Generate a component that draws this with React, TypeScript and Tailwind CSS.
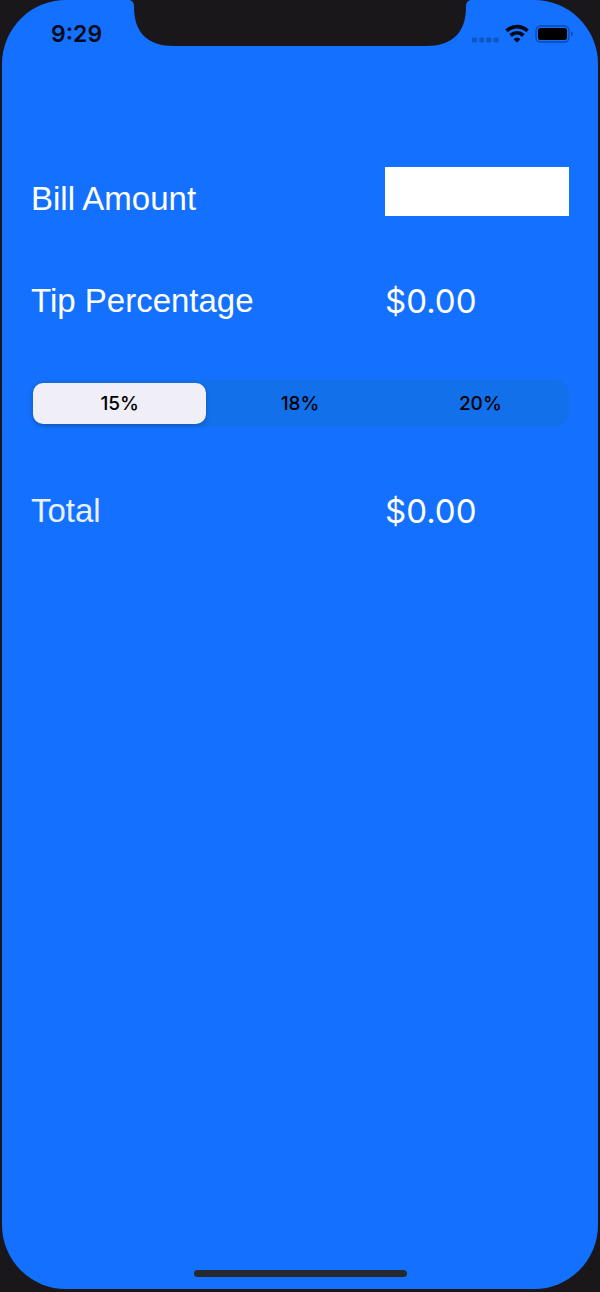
import { useState } from "react";

const TIP_RATES = [15, 18, 20];

function StatusBar() {
  return (
    <header className="relative flex h-[68px] shrink-0 items-center justify-between pr-6 pl-[49px]">
      <time className="text-[23px] leading-7 font-semibold text-[#020a18]">9:29</time>
      <svg
        className="absolute top-0 left-1/2 -translate-x-1/2"
        width="344"
        height="46"
        viewBox="0 0 344 46"
        aria-hidden="true"
      >
        <path
          d="M0 0C4 0 6 2 6 7C6 33 20 46 46 46H298C324 46 338 33 338 7C338 2 340 0 344 0Z"
          fill="#19171a"
        />
      </svg>
      <svg width="102" height="20" viewBox="0 0 102 20" role="img" aria-label="Wi-Fi on, battery full">
        <g fill="#1057c4">
          <rect x="0" y="13.5" width="5" height="5" rx="1" />
          <rect x="7.2" y="13.5" width="5" height="5" rx="1" />
          <rect x="14.4" y="13.5" width="5" height="5" rx="1" />
          <rect x="21.600" y="13.5" width="5" height="5" rx="1" />
        </g>
        <g fill="none" stroke="#000814" strokeWidth="3.8">
          <path d="M34.5 6.9C40.5 1.200 49.5 1.200 55.5 6.9" />
          <path d="M38.6 11.5C42.5 7.900 47.5 7.900 51.4 11.5" />
        </g>
        <path d="M45 18.5L41.600 15.200C43.5 13.300 46.5 13.300 48.4 15.200Z" fill="#000814" />
        <rect x="64" y="2" width="33" height="16" rx="4.5" fill="none" stroke="#0d4aa8" strokeWidth="1.3" />
        <rect x="66" y="4" width="29" height="12" rx="2.5" fill="#000" />
        <path d="M99 7.5C101.5 8.5 101.5 11.5 99 12.5Z" fill="#0d4aa8" />
      </svg>
    </header>
  );
}

export default function App() {
  const [bill, setBill] = useState("");
  const [rate, setRate] = useState(TIP_RATES[0]);

  const amount = Number.parseFloat(bill) || 0;
  const tip = (amount * rate) / 100;
  const row = "grid grid-cols-[1fr_184px] items-end";
  const caption = "font-['Liberation_Sans',sans-serif]";

  return (
    <div className="flex min-h-screen flex-col bg-[#19171a] px-[2px] pb-[3px] font-['Inter',sans-serif]">
      <div className="flex flex-1 flex-col rounded-[64px] bg-[#1471ff]">
        <StatusBar />
        <main className="flex-1 px-[29px] pt-[99px] text-[33px] leading-10 text-white">
          <div className={row}>
            <label htmlFor="bill" className={caption}>
              Bill Amount
            </label>
            <input
              id="bill"
              type="text"
              inputMode="decimal"
              value={bill}
              onChange={(event) => setBill(event.target.value)}
              className="mb-[3px] h-[49px] w-full bg-white px-2 text-black outline-none"
            />
          </div>
          <div className={`${row} mt-[62px]`}>
            <span className={caption}>Tip Percentage</span>
            <output htmlFor="bill">${tip.toFixed(2)}</output>
          </div>
          <div
            role="radiogroup"
            aria-label="Tip rate"
            className="mt-[59px] grid h-[47px] grid-cols-3 gap-[7px] rounded-[14px] bg-[#1270ea] px-[2px] py-[3px] text-[19px] leading-6 font-medium text-black"
          >
            {TIP_RATES.map((value) => (
              <label
                key={value}
                className="relative flex cursor-pointer items-center justify-center rounded-[10px] has-checked:bg-[#f0eef6] has-checked:shadow-[0_2px_5px_rgba(0,0,0,0.2)]"
              >
                <input
                  type="radio"
                  name="tip-rate"
                  value={value}
                  checked={rate === value}
                  onChange={() => setRate(value)}
                  className="absolute inset-0 cursor-pointer appearance-none"
                />
                {value}%
              </label>
            ))}
          </div>
          <div className={`${row} mt-16`}>
            <span className={`${caption} text-[#e6f0ff]`}>Total</span>
            <output htmlFor="bill">${(amount + tip).toFixed(2)}</output>
          </div>
        </main>
        <footer className="flex justify-center pb-3">
          <div className="h-[7px] w-[213px] rounded-full bg-[#262a2e]" />
        </footer>
      </div>
    </div>
  );
}
